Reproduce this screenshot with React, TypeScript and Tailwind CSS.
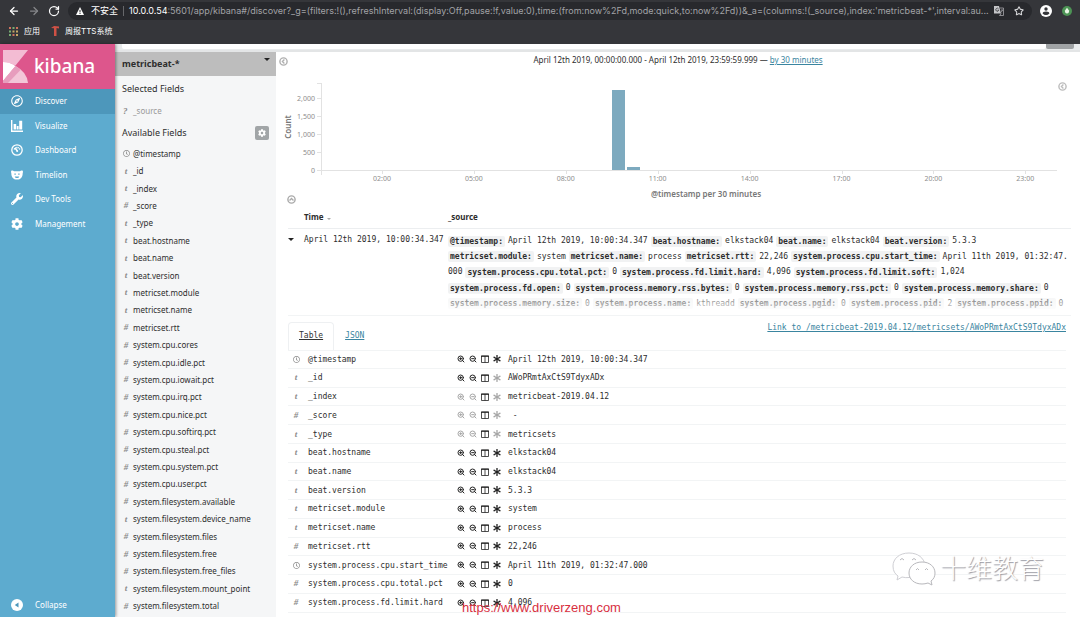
import { useState } from "react";
import type { ReactNode } from "react";
import { FaAsterisk, FaCog, FaRegClock, FaRegCompass, FaWrench } from "react-icons/fa";
import { ArrowLeft, ArrowRight, RotateCw, Star, ZoomIn, ZoomOut } from "lucide-react";

type FieldType = "date" | "string" | "number" | "unknown";

interface Field {
  name: string;
  type: FieldType;
}

interface DocRow extends Field {
  value: string;
  filterable: boolean;
  exists: boolean;
}

const fields: Field[] = [
  { name: "@timestamp", type: "date" },
  { name: "_id", type: "string" },
  { name: "_index", type: "string" },
  { name: "_score", type: "number" },
  { name: "_type", type: "string" },
  { name: "beat.hostname", type: "string" },
  { name: "beat.name", type: "string" },
  { name: "beat.version", type: "string" },
  { name: "metricset.module", type: "string" },
  { name: "metricset.name", type: "string" },
  { name: "metricset.rtt", type: "number" },
  { name: "system.cpu.cores", type: "number" },
  { name: "system.cpu.idle.pct", type: "number" },
  { name: "system.cpu.iowait.pct", type: "number" },
  { name: "system.cpu.irq.pct", type: "number" },
  { name: "system.cpu.nice.pct", type: "number" },
  { name: "system.cpu.softirq.pct", type: "number" },
  { name: "system.cpu.steal.pct", type: "number" },
  { name: "system.cpu.system.pct", type: "number" },
  { name: "system.cpu.user.pct", type: "number" },
  { name: "system.filesystem.available", type: "number" },
  { name: "system.filesystem.device_name", type: "string" },
  { name: "system.filesystem.files", type: "number" },
  { name: "system.filesystem.free", type: "number" },
  { name: "system.filesystem.free_files", type: "number" },
  { name: "system.filesystem.mount_point", type: "string" },
  { name: "system.filesystem.total", type: "number" },
];

const docRows: DocRow[] = [
  { name: "@timestamp", type: "date", value: "April 12th 2019, 10:00:34.347", filterable: true, exists: true },
  { name: "_id", type: "string", value: "AWoPRmtAxCtS9TdyxADx", filterable: true, exists: false },
  { name: "_index", type: "string", value: "metricbeat-2019.04.12", filterable: false, exists: false },
  { name: "_score", type: "number", value: " -", filterable: false, exists: false },
  { name: "_type", type: "string", value: "metricsets", filterable: false, exists: false },
  { name: "beat.hostname", type: "string", value: "elkstack04", filterable: true, exists: true },
  { name: "beat.name", type: "string", value: "elkstack04", filterable: true, exists: true },
  { name: "beat.version", type: "string", value: "5.3.3", filterable: true, exists: true },
  { name: "metricset.module", type: "string", value: "system", filterable: true, exists: true },
  { name: "metricset.name", type: "string", value: "process", filterable: true, exists: true },
  { name: "metricset.rtt", type: "number", value: "22,246", filterable: true, exists: true },
  { name: "system.process.cpu.start_time", type: "date", value: "April 11th 2019, 01:32:47.000", filterable: true, exists: true },
  { name: "system.process.cpu.total.pct", type: "number", value: "0", filterable: true, exists: true },
  { name: "system.process.fd.limit.hard", type: "number", value: "4,096", filterable: true, exists: true },
];

// One array per line of the summary; an empty key continues the value above it
const sourceLines: [string, string][][] = [
  [
    ["@timestamp:", "April 12th 2019, 10:00:34.347"],
    ["beat.hostname:", "elkstack04"],
    ["beat.name:", "elkstack04"],
    ["beat.version:", "5.3.3"],
  ],
  [
    ["metricset.module:", "system"],
    ["metricset.name:", "process"],
    ["metricset.rtt:", "22,246"],
    ["system.process.cpu.start_time:", "April 11th 2019, 01:32:47."],
  ],
  [
    ["", "000"],
    ["system.process.cpu.total.pct:", "0"],
    ["system.process.fd.limit.hard:", "4,096"],
    ["system.process.fd.limit.soft:", "1,024"],
  ],
  [
    ["system.process.fd.open:", "0"],
    ["system.process.memory.rss.bytes:", "0"],
    ["system.process.memory.rss.pct:", "0"],
    ["system.process.memory.share:", "0"],
  ],
  [
    ["system.process.memory.size:", "0"],
    ["system.process.name:", "kthreadd"],
    ["system.process.pgid:", "0"],
    ["system.process.pid:", "2"],
    ["system.process.ppid:", "0"],
  ],
];

const BarsIcon = () => (
  <svg viewBox="0 0 12 12" className="size-3" fill="currentColor">
    <path d="M0 0h1.4v10.4H12V12H0zM2.6 4h2.6v5.400H2.6zM5.800 6h1.800v3.400H5.800zM8.200 .8h3v8.600h-3z" />
  </svg>
);

const GaugeIcon = () => (
  <svg viewBox="0 0 12 12" className="size-3" fill="none" stroke="currentColor">
    <circle cx="6" cy="6" r="5.2" strokeWidth="1.3" />
    <path d="M3.200 5.400a3 3 0 0 1 5.600 0" strokeWidth="1.500" strokeDasharray="1.300 .6" />
    <path d="M4 4l2.200 2.800" strokeWidth="1.400" />
    <circle cx="6.200" cy="7" r="1" fill="currentColor" stroke="none" />
  </svg>
);

const BearIcon = () => (
  <svg viewBox="0 0 12 12" className="size-3" fill="currentColor">
    <path
      fillRule="evenodd"
      d="M.3 1.800C1.200 1.200 2.300 1.400 3 2.200h6c.7-.8 1.800-1 2.700-.4.4.8.3 1.600 0 2.200C11.700 8 10 10.600 6 10.600S.3 8 .3 4C0 3.400-.1 2.600.3 1.800zM3.400 4.600v1.200h1.400V4.600zM7.200 4.600v1.200h1.400V4.600zM3.800 7.400c.2 1.200 1 1.600 2.200 1.600s2-.4 2.200-1.600z"
    />
  </svg>
);

const ChevronCircle = ({ className }: { className?: string }) => (
  <svg viewBox="0 0 10 10" className={`size-[9px] ${className ?? ""}`} fill="none" stroke="currentColor">
    <circle cx="5" cy="5" r="4" strokeWidth="1.600" />
    <path d="M6 2.800L3.800 5 6 7.200" strokeWidth="1.500" />
  </svg>
);

const ColumnsIcon = () => (
  <svg viewBox="0 0 8 8" className="size-2" fill="none" stroke="currentColor">
    <path d="M.5 1h7v6.500h-7zM4 1v6.500" strokeWidth=".8" />
    <path d="M0 1.200h8" strokeWidth="1.100" />
  </svg>
);

const KibanaMark = () => (
  <svg viewBox="0 0 25 33" className="h-[33px] w-[25px]">
    <path d="M0 0h25L12.500 15.500Q6 12 0 12z" fill="#f3bcd3" />
    <path d="M0 12q7 0 12.500 4L0 31z" fill="#fff" />
    <path d="M12.500 16Q24 22 25 33H0v-2z" fill="#f3c6d8" />
    <path d="M12.500 16q3 1.500 5 4L5 33H0v-2z" fill="#e79dbd" />
  </svg>
);

const navItems: { label: string; icon: ReactNode }[] = [
  { label: "Discover", icon: <FaRegCompass className="size-3" /> },
  { label: "Visualize", icon: <BarsIcon /> },
  { label: "Dashboard", icon: <GaugeIcon /> },
  { label: "Timelion", icon: <BearIcon /> },
  { label: "Dev Tools", icon: <FaWrench className="size-3" /> },
  { label: "Management", icon: <FaCog className="size-3" /> },
];

function TypeIcon({ type }: { type: FieldType }) {
  if (type === "date") return <FaRegClock className="size-[7px] text-[#888]" />;
  const glyph = { string: "t", number: "#", unknown: "?" }[type];
  return (
    <span className="font-['Liberation_Serif',serif] text-[9px] leading-none font-bold italic text-[#8a8a8a]">
      {glyph}
    </span>
  );
}

function BrowserBar() {
  return (
    <header className="shrink-0 bg-[#35363a] font-[Inter,'Noto_Sans_CJK_SC',sans-serif] text-white">
      <div className="flex h-[22px] items-center">
        <div className="flex shrink-0 items-center gap-2 pl-2">
          <button aria-label="Back"><ArrowLeft className="size-3" strokeWidth={2.5} /></button>
          <button aria-label="Forward"><ArrowRight className="size-3 text-[#85868a]" strokeWidth={2.5} /></button>
          <button aria-label="Reload"><RotateCw className="size-3" strokeWidth={2.5} /></button>
        </div>
        <div className="ml-2 flex h-[18px] min-w-0 flex-1 items-center rounded-full bg-[#28292d] px-2 text-[9px]">
          <svg viewBox="0 0 8 8" className="mr-[7px] size-2 shrink-0">
            <path d="M4 0l4 8H0z" fill="#fff" />
            <path d="M4 2.800v2.600M4 6v1" stroke="#28292d" />
          </svg>
          <span className="shrink-0">不安全</span>
          <span className="mx-[5px] h-2.5 w-px shrink-0 bg-[#66676a]" />
          <label htmlFor="url" className="shrink-0">10.0.0.54</label>
          <input
            id="url"
            readOnly
            className="min-w-0 flex-1 bg-transparent text-[#a2a3a7] outline-none"
            value=":5601/app/kibana#/discover?_g=(filters:!(),refreshInterval:(display:Off,pause:!f,value:0),time:(from:now%2Fd,mode:quick,to:now%2Fd))&_a=(columns:!(_source),index:'metricbeat-*',interval:au..."
          />
          <button aria-label="Translate" className="ml-1 shrink-0">
            <svg viewBox="0 0 10 10" className="size-2.5">
              <path d="M0 0h5l2 7.500H0z" fill="#c4c5c8" />
              <path d="M5.800 2h3.700v7.500H5.500l1.800-2M7 4h2M8.500 4L7 6.500" stroke="#a4a5a8" strokeWidth=".8" fill="none" />
              <path d="M4.600 3a1.500 1.500 0 1 0 .1 1.300H3.500" stroke="#35363a" strokeWidth=".8" fill="none" />
            </svg>
          </button>
          <button aria-label="Bookmark" className="ml-2.5 shrink-0">
            <Star className="size-2.5 text-[#d5d6d8]" strokeWidth={2.5} />
          </button>
        </div>
        <div className="flex shrink-0 items-center gap-2.5 pl-2 pr-2">
          <button aria-label="Profile">
            <svg viewBox="0 0 12 12" className="size-3">
              <circle cx="6" cy="6" r="6" fill="#fff" />
              <circle cx="6" cy="4" r="1.700" fill="#35363a" />
              <path d="M2.600 8.600q0-2 3.400-2t3.400 2q-1.400 1.500-3.400 1.500t-3.400-1.500z" fill="#35363a" />
            </svg>
          </button>
          <button aria-label="Extension">
            <svg viewBox="0 0 10 10" className="size-2.5">
              <circle cx="5" cy="5" r="5" fill="#4d9455" />
              <path d="M5 1.800l2 2.700q.5 2.500-2 3-2.500-.5-2-3z" fill="#e9f5e5" />
            </svg>
          </button>
        </div>
      </div>
      <nav className="flex h-[22px] items-center pb-1 pl-[9px] text-[8px]">
        <a href="#apps" className="flex items-center gap-1.5">
          <svg viewBox="0 0 9 9" className="size-[9px]">
            <path d="M0 0h2v2H0zM3.500 7h2v2h-2zM7 0h2v2H7z" fill="#d0735f" />
            <path d="M3.500 0h2v2h-2zM0 3.500h2v2H0zM0 7h2v2H0z" fill="#78ad73" />
            <path d="M3.500 3.500h2v2h-2zM7 3.500h2v2H7zM7 7h2v2H7z" fill="#c6a765" />
          </svg>
          应用
        </a>
        <a href="#report" className="ml-[11px] flex items-center gap-1.5">
          <svg viewBox="0 0 8 10" className="h-2.5 w-2">
            <path d="M0 2l3-2 5 .6v1.800L5.500 2v8H3V2.200z" fill="#cf5145" />
          </svg>
          周报TTS系统
        </a>
      </nav>
    </header>
  );
}

function GlobalNav() {
  return (
    <aside className="z-10 flex w-[115px] shrink-0 flex-col bg-[#5dabcf] text-white shadow-[1px_0_3px_#0006]">
      <div className="flex h-[45px] shrink-0 items-center gap-1.5 bg-[#dd568c] pl-[3px]">
        <KibanaMark />
        <span className="font-['Noto_Sans',sans-serif] text-[19px] leading-none font-medium">kibana</span>
      </div>
      <nav className="grid h-[147px] auto-rows-fr text-[8px]">
        {navItems.map((item, i) => (
          <a
            key={item.label}
            href={`#${item.label}`}
            className={`flex items-center gap-3 pl-[11px] ${i === 0 ? "bg-[#4d97bb]" : ""}`}
          >
            {item.icon}
            {item.label}
          </a>
        ))}
      </nav>
      <button className="mt-auto flex h-[25px] items-center gap-3 pl-[11px] text-[8px]">
        <svg viewBox="0 0 12 12" className="size-3">
          <circle cx="6" cy="6" r="6" fill="#fff" />
          <path d="M7.500 3.500v5L3.800 6z" fill="#4d97bb" />
        </svg>
        Collapse
      </button>
    </aside>
  );
}

function FieldSidebar() {
  return (
    <section className="flex w-[161px] shrink-0 flex-col bg-[#f5f6f7] text-[#2d2d2d]">
      <div className="relative flex h-6 shrink-0 items-center bg-[#bdbdbd]">
        <select
          aria-label="Index pattern"
          className="h-5 w-full appearance-none bg-transparent pl-[7px] text-[9px] leading-5 font-bold outline-none"
        >
          <option>metricbeat-*</option>
        </select>
        <span className="pointer-events-none absolute right-1.5 top-1.5 border-x-[3px] border-t-[3px] border-x-transparent border-t-[#222]" />
      </div>
      <h2 className="mt-[7px] pl-[7px] text-[9px] leading-3">Selected Fields</h2>
      <div className="mt-2 flex h-4 items-center pl-[7px] text-[8px] text-[#999]">
        <span className="flex w-[11px] pl-px"><TypeIcon type="unknown" /></span>
        _source
      </div>
      <div className="mt-1.5 flex h-4 items-center justify-between pl-[7px] pr-[7px]">
        <h2 className="text-[9px] leading-3">Available Fields</h2>
        <button aria-label="Field settings" className="flex size-3.5 items-center justify-center rounded-xs bg-[#a1a5a7] text-white">
          <FaCog className="size-2" />
        </button>
      </div>
      <ul className="mt-1 grid flex-1 auto-rows-fr pb-[2px] text-[8px]">
        {fields.map((field) => (
          <li key={field.name} className="flex items-center pl-[7px]">
            <span className="flex w-[11px] justify-center pr-[3px]"><TypeIcon type={field.type} /></span>
            {field.name}
          </li>
        ))}
      </ul>
    </section>
  );
}

function Histogram() {
  const yTicks = [
    { label: "2,000", y: 30 },
    { label: "1,500", y: 48 },
    { label: "1,000", y: 66 },
    { label: "500", y: 84 },
    { label: "0", y: 102 },
  ];
  const xTicks = ["02:00", "05:00", "08:00", "11:00", "14:00", "17:00", "20:00", "23:00"];

  return (
    <svg viewBox="0 0 804 140" className="w-full">
      <g stroke="#e2e2e2" fill="none">
        <path d="M45.500 15v92M41 102.500h740M41 15.500h4" />
        {yTicks.map((tick) => (
          <path key={tick.label} d={`M41 ${tick.y + 0.5}h4`} />
        ))}
        {xTicks.map((label, i) => (
          <path key={label} d={`M${Math.round(106 + i * 91.9) + 0.5} 102v4`} />
        ))}
      </g>
      <g fill="#7daabf">
        <rect x="336" y="22" width="13" height="80" />
        <rect x="351" y="99" width="13" height="3" />
      </g>
      <g fill="#8d8d8d" fontSize="7">
        {yTicks.map((tick) => (
          <text key={tick.label} x="39" y={tick.y + 3} textAnchor="end">
            {tick.label}
          </text>
        ))}
        {xTicks.map((label, i) => (
          <text key={label} x={106 + i * 91.9} y="113" textAnchor="middle">
            {label}
          </text>
        ))}
      </g>
      <g fill="#777" fontSize="8" fontWeight="600" textAnchor="middle">
        <text transform="translate(15 59) rotate(-90)">Count</text>
        <text x="430" y="129">@timestamp per 30 minutes</text>
      </g>
    </svg>
  );
}

function DocDetails() {
  const [tab, setTab] = useState("Table");

  return (
    <div className="pr-[5px]">
      <div className="flex h-[35px] items-end justify-between border-b border-[#f2f4f5]">
        <div className="flex">
          {["Table", "JSON"].map((name) => (
            <button
              key={name}
              onClick={() => setTab(name)}
              className={`h-7 px-2.5 underline ${
                tab === name ? "rounded-t-sm border border-b-0 border-[#eef0f2] text-[#333]" : "border border-transparent text-[#3a85a0]"
              }`}
            >
              {name}
            </button>
          ))}
        </div>
        <a href="#doc" className="mb-4 leading-3 text-[#3a85a0] underline">
          Link to /metricbeat-2019.04.12/metricsets/AWoPRmtAxCtS9TdyxADx
        </a>
      </div>
      <table className="h-[262px] w-full table-fixed">
        <colgroup>
          <col className="w-5" />
          <col className="w-[149px]" />
          <col className="w-[51px]" />
          <col />
        </colgroup>
        <tbody>
          {docRows.map((row) => (
            <tr key={row.name} className="border-b border-[#f2f4f5]">
              <td className="p-0">
                <span className="flex w-4 justify-center"><TypeIcon type={row.type} /></span>
              </td>
              <td className="p-0 pt-px">{row.name}</td>
              <td className="p-0">
                <div className="flex items-center gap-1 text-[#222]">
                  <button aria-label="Filter for value" className={row.filterable ? "" : "opacity-40"}>
                    <ZoomIn className="size-2" strokeWidth={3} />
                  </button>
                  <button aria-label="Filter out value" className={row.filterable ? "" : "opacity-40"}>
                    <ZoomOut className="size-2" strokeWidth={3} />
                  </button>
                  <button aria-label="Toggle column in table"><ColumnsIcon /></button>
                  <button aria-label="Filter for field present" className={row.exists ? "" : "opacity-40"}>
                    <FaAsterisk className="size-2" />
                  </button>
                </div>
              </td>
              <td className="whitespace-pre p-0 pt-px">{row.value}</td>
            </tr>
          ))}
        </tbody>
      </table>
    </div>
  );
}

function DocTable() {
  return (
    <table className="ml-3 w-[calc(100%-21px)] table-fixed text-left font-['DejaVu_Sans_Mono','Liberation_Mono',monospace] text-[8px] text-[#2d2d2d]">
      <colgroup>
        <col className="w-4" />
        <col className="w-[144px]" />
        <col />
      </colgroup>
      <thead className="font-['Noto_Sans','Open_Sans',sans-serif]">
        <tr className="h-5 border-b border-[#eceef0]">
          <th aria-label="Expand" />
          <th className="p-0 pb-0.5 font-bold">
            Time
            <span className="ml-[3px] inline-block border-x-2 border-t-2 border-x-transparent border-t-[#aaa]" />
          </th>
          <th className="p-0 pb-0.5 font-bold">_source</th>
        </tr>
      </thead>
      <tbody>
        <tr className="border-b border-[#f2f4f5] align-top">
          <td className="p-0 pt-[9px]">
            <button aria-label="Collapse row" className="block border-x-[3px] border-t-[3px] border-x-transparent border-t-[#222]" />
          </td>
          <td className="p-0 pt-[3px] leading-4">April 12th 2019, 10:00:34.347</td>
          <td className="p-0 pt-[5px]">
            <div className="relative grid h-[81px] auto-rows-fr overflow-hidden pb-[3px]">
              {sourceLines.map((line, i) => (
                <div key={i} className="flex items-center gap-[3px] whitespace-nowrap">
                  {line.map(([key, value]) => (
                    <span key={key} className="flex items-center gap-[3px]">
                      {key && <b className="rounded-xs bg-[#f1f2f3] px-0.5 leading-[11px]">{key}</b>}
                      {value}
                    </span>
                  ))}
                </div>
              ))}
              <div className="absolute inset-x-0 bottom-0 h-[22px] bg-linear-to-b from-white/20 to-white" />
            </div>
          </td>
        </tr>
        <tr>
          <td colSpan={3} className="p-0">
            <DocDetails />
          </td>
        </tr>
      </tbody>
    </table>
  );
}

function Watermark() {
  return (
    <div className="pointer-events-none absolute bottom-7 right-9 flex items-center gap-1">
      <svg viewBox="0 0 44 36" className="h-9 w-11" fill="#fff" stroke="#b8b8bc" strokeWidth="1">
        <path d="M17 1C7 1 1 7 1 14c0 5 2 8 5 10l-1 4 5-3q4 1 7 .5C28 25 33 20 33 13 32 6 26 1 17 1z" stroke="#cfcfd4" />
        <path d="M30 10c-8 0-13 5-13 11s5 11 13 11q3 0 6-1l4 2-1-4c3-2 4-5 4-8 0-6-5-11-13-11z" />
        <path d="M8 8q2-3 4 0M20 8q2-3 4 0M24 18q1.500-3 3 0M33 18q1.500-3 3 0" fill="none" />
      </svg>
      <span className="mb-1.5 font-['Noto_Sans_CJK_SC',sans-serif] text-[26px] font-light leading-8 text-white [text-shadow:1px_1px_1px_#9a9aa2]">
        十维教育
      </span>
    </div>
  );
}

export default function App() {
  return (
    <div className="relative flex h-screen flex-col overflow-hidden bg-white font-['Noto_Sans','Open_Sans',sans-serif]">
      <BrowserBar />
      <div className="flex min-h-0 flex-1">
        <GlobalNav />
        <div className="flex min-w-0 flex-1 flex-col">
          <div className="flex h-2 shrink-0 items-start border-b-2 border-[#e3e5e6] bg-[#e9ebec] pl-[7px] pr-1.5">
            <input aria-label="Search" className="h-[5px] min-w-0 flex-1 rounded-b-xs bg-white outline-none" />
            <button aria-label="Submit search" className="h-[5px] w-7 rounded-b-xs bg-[#a0a3a5]" />
          </div>
          <div className="flex min-h-0 flex-1">
            <FieldSidebar />
            <main className="relative min-w-0 flex-1 overflow-hidden">
              <p className="h-4 text-center text-[8px] leading-4 text-[#2d2d2d]">
                April 12th 2019, 00:00:00.000 - April 12th 2019, 23:59:59.999 —{" "}
                <a href="#interval" className="text-[#3a85a0] underline">by 30 minutes</a>
              </p>
              <button aria-label="Hide fields" className="absolute left-[3px] top-[5px] text-[#b0b0b0]">
                <ChevronCircle />
              </button>
              <button aria-label="Show panel" className="absolute right-[13px] top-[30px] text-[#bdbdbd]">
                <ChevronCircle />
              </button>
              <Histogram />
              <button aria-label="Hide chart" className="absolute left-[11px] top-[143px] text-[#aaa]">
                <ChevronCircle className="rotate-90" />
              </button>
              <DocTable />
            </main>
          </div>
        </div>
      </div>
      <Watermark />
      <a
        href="https://www.driverzeng.com"
        className="absolute bottom-0 left-[462px] font-['Liberation_Sans',sans-serif] text-[13px] leading-[18px] text-[#d8303f]"
      >
        https://www.driverzeng.com
      </a>
    </div>
  );
}
